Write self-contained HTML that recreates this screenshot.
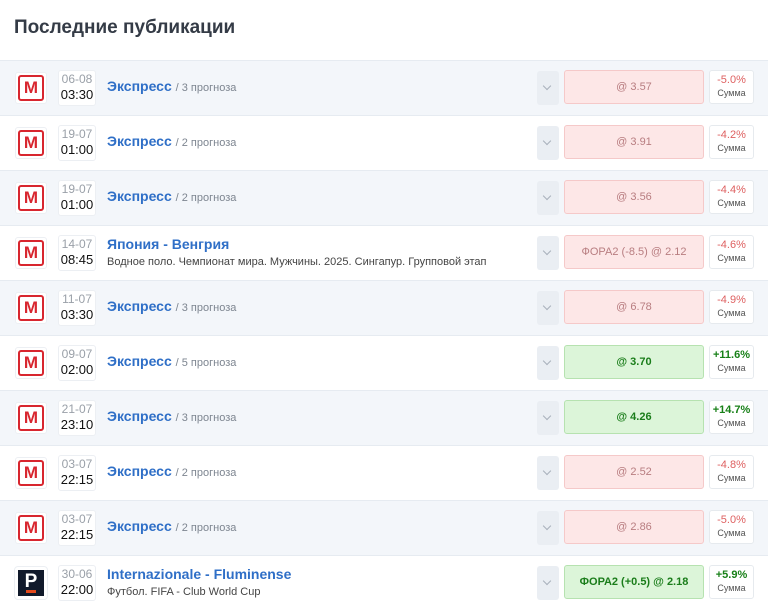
<!DOCTYPE html>
<html><head><meta charset="utf-8"><style>
*{box-sizing:border-box;margin:0;padding:0}
body{width:768px;height:602px;overflow:hidden;background:#fff;font-family:"Liberation Sans",Arial,sans-serif;position:relative}
h1{position:absolute;left:14px;top:17px;font-size:19px;font-weight:bold;color:#343b46;letter-spacing:0}
.row{position:absolute;left:0;width:768px;height:55px;border-top:1px solid #e6ebf1}
.row.s{background:#f3f6fa}
.logo{position:absolute;left:15px;top:11px;width:32px;height:32px;background:#fff;border:1px solid #eceff3;border-radius:3px}
.logo .m{position:absolute;left:2px;top:2px;width:26px;height:26px;border:2px solid #d8262f;border-radius:3px;color:#d8262f;font-weight:bold;font-size:17px;text-align:center;line-height:22px}
.logo.p{background:#111a2b;border:3px solid #fff;outline:1px solid #eceff3}
.logo.p b{position:absolute;left:0;right:0;top:1px;text-align:center;color:#fff;font-size:19px}
.logo.p i{position:absolute;left:8px;top:20px;width:10px;height:3px;background:#e2491c}
.date{position:absolute;left:58px;top:9px;width:38px;height:36px;background:#fff;border:1px solid #eceff3;border-radius:3px;text-align:center;font-size:12px;line-height:16px;padding-top:0}
.date span{color:#9aa0a8;display:block}
.date b{font-weight:normal;color:#111;font-size:13px;display:block}
.t{position:absolute;left:107px;top:17px;font-size:14px;color:#2f6fc7;font-weight:bold}
.t small{font-weight:normal;color:#7d8590;font-size:11px}
.t2{top:10px}
.sub{position:absolute;left:107px;top:30px;font-size:11px;color:#444}
.dd{position:absolute;left:537px;top:10px;width:22px;height:34px;background:#eaeef3;border-radius:3px}
.dd:after{content:"";position:absolute;left:7px;top:12px;width:5px;height:5px;border-right:1px solid #a8b0bb;border-bottom:1px solid #a8b0bb;transform:rotate(45deg)}
.bet{position:absolute;left:564px;top:9px;width:140px;height:34px;border-radius:3px;text-align:center;line-height:32px;font-size:11px}
.bet.l{background:#fde7e7;border:1px solid #f5c9c9;color:#b87d80}
.bet.w{background:#dcf5d9;border:1px solid #b6e2b0;color:#1a7d1a;font-weight:bold}
.sum{position:absolute;left:709px;top:9px;width:45px;height:34px;background:#fff;border:1px solid #e6eaee;border-radius:3px;text-align:center;font-size:11px;line-height:13px;padding-top:3px}
.sum span{display:block;color:#de6060}
.sum.w span{color:#188018;font-weight:bold}
.sum small{font-size:9px;color:#555}
</style></head><body>
<h1>Последние публикации</h1>

<div class="row s" style="top:60px"><div class="logo"><div class="m">M</div></div><div class="date"><span>06-08</span><b>03:30</b></div><div class="t">Экспресс <small>/ 3 прогноза</small></div><div class="dd"></div><div class="bet l">@ 3.57</div><div class="sum"><span>-5.0%</span><small>Сумма</small></div></div>

<div class="row" style="top:115px"><div class="logo"><div class="m">M</div></div><div class="date"><span>19-07</span><b>01:00</b></div><div class="t">Экспресс <small>/ 2 прогноза</small></div><div class="dd"></div><div class="bet l">@ 3.91</div><div class="sum"><span>-4.2%</span><small>Сумма</small></div></div>

<div class="row s" style="top:170px"><div class="logo"><div class="m">M</div></div><div class="date"><span>19-07</span><b>01:00</b></div><div class="t">Экспресс <small>/ 2 прогноза</small></div><div class="dd"></div><div class="bet l">@ 3.56</div><div class="sum"><span>-4.4%</span><small>Сумма</small></div></div>

<div class="row" style="top:225px"><div class="logo"><div class="m">M</div></div><div class="date"><span>14-07</span><b>08:45</b></div><div class="t t2">Япония - Венгрия</div><div class="sub">Водное поло. Чемпионат мира. Мужчины. 2025. Сингапур. Групповой этап</div><div class="dd"></div><div class="bet l">ФОРА2 (-8.5) @ 2.12</div><div class="sum"><span>-4.6%</span><small>Сумма</small></div></div>

<div class="row s" style="top:280px"><div class="logo"><div class="m">M</div></div><div class="date"><span>11-07</span><b>03:30</b></div><div class="t">Экспресс <small>/ 3 прогноза</small></div><div class="dd"></div><div class="bet l">@ 6.78</div><div class="sum"><span>-4.9%</span><small>Сумма</small></div></div>

<div class="row" style="top:335px"><div class="logo"><div class="m">M</div></div><div class="date"><span>09-07</span><b>02:00</b></div><div class="t">Экспресс <small>/ 5 прогноза</small></div><div class="dd"></div><div class="bet w">@ 3.70</div><div class="sum w"><span>+11.6%</span><small>Сумма</small></div></div>

<div class="row s" style="top:390px"><div class="logo"><div class="m">M</div></div><div class="date"><span>21-07</span><b>23:10</b></div><div class="t">Экспресс <small>/ 3 прогноза</small></div><div class="dd"></div><div class="bet w">@ 4.26</div><div class="sum w"><span>+14.7%</span><small>Сумма</small></div></div>

<div class="row" style="top:445px"><div class="logo"><div class="m">M</div></div><div class="date"><span>03-07</span><b>22:15</b></div><div class="t">Экспресс <small>/ 2 прогноза</small></div><div class="dd"></div><div class="bet l">@ 2.52</div><div class="sum"><span>-4.8%</span><small>Сумма</small></div></div>

<div class="row s" style="top:500px"><div class="logo"><div class="m">M</div></div><div class="date"><span>03-07</span><b>22:15</b></div><div class="t">Экспресс <small>/ 2 прогноза</small></div><div class="dd"></div><div class="bet l">@ 2.86</div><div class="sum"><span>-5.0%</span><small>Сумма</small></div></div>

<div class="row" style="top:555px"><div class="logo p"><b>P</b><i></i></div><div class="date"><span>30-06</span><b>22:00</b></div><div class="t t2">Internazionale - Fluminense</div><div class="sub">Футбол. FIFA - Club World Cup</div><div class="dd"></div><div class="bet w">ФОРА2 (+0.5) @ 2.18</div><div class="sum w"><span>+5.9%</span><small>Сумма</small></div></div>
</body></html>
